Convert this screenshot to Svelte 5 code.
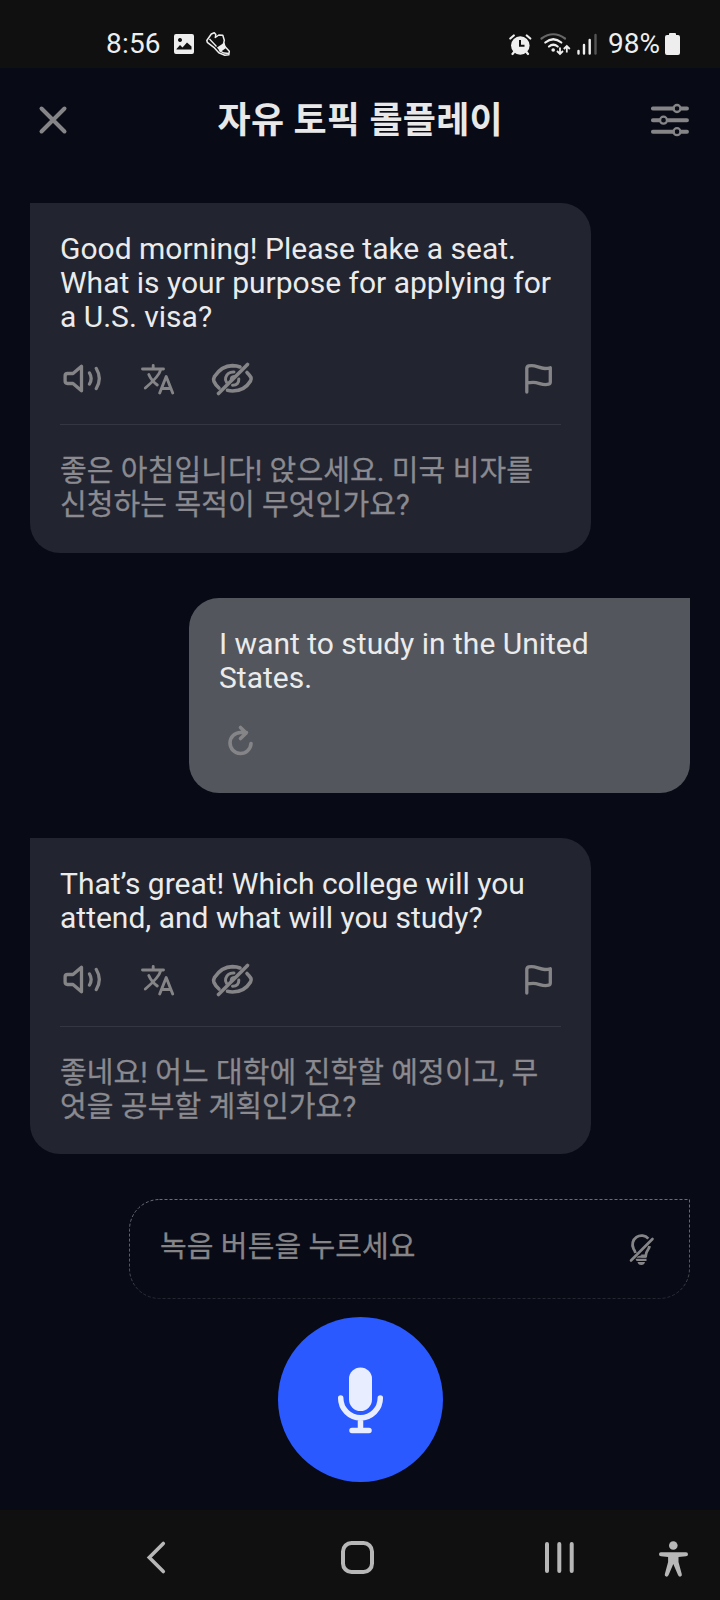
<script>
  const messages = [
    {
      side: 'tutor',
      lines: ['Good morning! Please take a seat.', 'What is your purpose for applying for', 'a U.S. visa?'],
      translation: ['좋은 아침입니다! 앉으세요. 미국 비자를', '신청하는 목적이 무엇인가요?']
    },
    {
      side: 'user',
      lines: ['I want to study in the United', 'States.']
    },
    {
      side: 'tutor late',
      lines: ['That’s great! Which college will you', 'attend, and what will you study?'],
      translation: ['좋네요! 어느 대학에 진학할 예정이고, 무', '엇을 공부할 계획인가요?']
    }
  ];
</script>

<div class="screen">
  <div class="status">
    <span class="clock">8:56</span>
    <svg class="pic" width="20" height="20" viewBox="174 34 20 20">
      <path fill="#eee" fill-rule="evenodd" d="M176 34h16q2 0 2 2v16q0 2-2 2h-16q-2 0-2-2v-16q0-2 2-2zM176.500 49.500h15v-3l-4.500-4-4.500 5-2.500-2.500-3.500 4zM180 38a2 2 0 1 0 .01 0z" />
    </svg>
    <svg class="shoe" width="26" height="26" viewBox="205 31 26 26">
      <path fill="none" stroke="#eee" stroke-width="1.500" stroke-linejoin="round" d="M206.800 40.500l4.500-6.500 3-1.300 1.500 1.800-.5 3 3.500-2.500 4 .3 1.500 5-1 4.500 6 6.500-.5 3.500-4 .5-6-2.500-5-5.500-6.500-5z" />
      <path fill="#eee" d="M217 47.500l7.500-5 1.500 5.500-5.500 4z" />
      <path fill="none" stroke="#eee" stroke-width="1.300" d="M209.500 39l7 7.500M219 50.500l5 2.500 5 .5" />
    </svg>
    <svg class="alarm" width="23" height="23" viewBox="509 32 23 23">
      <circle cx="520.300" cy="44.500" r="9.300" fill="#eee" />
      <g fill="none" stroke="#eee" stroke-width="2.200" stroke-linecap="round">
        <path d="M510.300 37.500l3.500-3M530.300 37.500l-3.500-3M514.500 50.500l-2 2.500M526 50.500l2 2.500" />
      </g>
      <path d="M520 39v5.800h4.500" fill="none" stroke="#101010" stroke-width="2" />
    </svg>
    <svg class="wifi" width="32" height="24" viewBox="540 31 32 24">
      <g fill="none" stroke-width="2.200" stroke-linecap="round">
        <path d="M541.500 37.500q11.700-8.500 23.500 0" stroke="#666" />
        <path d="M545.300 41.500q8-6.500 16 0M549 45.500q4.300-3.500 8.700 0" stroke="#eee" />
      </g>
      <circle cx="553.200" cy="49" r="1.800" fill="#eee" />
      <path fill="none" stroke="#eee" stroke-width="1.800" d="M560 46.500v6M557 50l3 3 3-3M566.800 51.500v-6M563.800 48l3-3 3 3" />
    </svg>
    <svg class="signal" width="22" height="24" viewBox="576 31 22 24">
      <path stroke="#eee" stroke-width="2.400" stroke-linecap="round" d="M578.500 50v2.500M584 44v8.500M589.700 39v13.500" />
      <path stroke="#555" stroke-width="2.400" stroke-linecap="round" d="M595.500 34v18.500" />
    </svg>
    <span class="percent">98%</span>
    <svg class="battery" width="16" height="24" viewBox="665 32 16 24">
      <path fill="#eee" d="M669 35v-1q0-1 1-1h5q1 0 1 1v1h2q2 0 2 2v16q0 2-2 2h-11q-2 0-2-2v-16q0-2 2-2z" />
    </svg>
  </div>

  <header>
    <svg width="30" height="30" viewBox="37.500 105.500 30 30">
      <path d="M41 109l23 23M64 109l-23 23" stroke="#858588" stroke-width="4" stroke-linecap="round" />
    </svg>
    <h1>자유 토픽 롤플레이</h1>
    <svg width="40" height="34" viewBox="650 103 40 34">
      <g stroke="#858588" stroke-width="3.900" stroke-linecap="round" fill="none">
        <path d="M652.900 108.500h20M681.500 108.500h5.500M652.900 120.200h6.300M668 120.200h19M652.900 131.700h20M681.500 131.700h5.500" />
        <circle cx="677" cy="108.500" r="3.500" stroke-width="2.300" />
        <circle cx="663.500" cy="120.200" r="3.500" stroke-width="2.300" />
        <circle cx="677" cy="131.700" r="3.500" stroke-width="2.300" />
      </g>
    </svg>
  </header>

  <main>
    {#each messages as m}
      <section class="bubble {m.side}">
        <div class="speech">
          {#each m.lines as line}<p>{line}</p>{/each}
        </div>
        {#if m.translation}
          <div class="actions">
            <svg width="44" height="40" viewBox="60.500 358 44 40">
              <g fill="none" stroke="#858588" stroke-width="3.300" stroke-linecap="round" stroke-linejoin="round">
                <path d="M82 366.200v24.600L73.500 383.500h-5.500q-2.400 0-2.400-2.400v-5.200q0-2.400 2.400-2.400h5.500z" />
                <path d="M90 373q3.300 5.500 0 11M96.800 368.500q6 10 0 20" />
              </g>
            </svg>
            <svg width="36" height="40" viewBox="140 358 36 40">
              <g fill="none" stroke="#858588" stroke-width="2.900" stroke-linecap="round" stroke-linejoin="round">
                <path d="M142.500 369h21M153.200 365.500v3M160.800 369.500q-1.800 7-15.500 18.500M148.800 374.500q2.500 6 8.500 10.500" />
                <path d="M159.700 393l6.500-16.500 6.500 16.500M162 388.500h8.500" />
              </g>
            </svg>
            <svg width="46" height="40" viewBox="208.500 358 46 40">
              <g fill="none" stroke="#858588" stroke-width="3.600" stroke-linecap="round">
                <path d="M218.500 388q-3.500-3-5-6.500Q212.500 379 214 376.500Q221 365.800 232 365.600Q236.500 365.700 239.500 367M246.500 372.500q2.500 2.500 4 5Q251 379 250 381Q244 391 232 391Q229.500 391 227 390.300" />
                <path d="M226 382.200q-1.600-2-.8-4.700Q227 371.700 233.500 372M238.300 379q.3 6-6.300 6.300M230.800 379.500q-.3-2.500 3-3" stroke-width="3" />
                <path d="M218 393.500L247 364.500" stroke-width="3.600" />
              </g>
            </svg>
            <svg class="flag" width="32" height="40" viewBox="522 358 32 40">
              <path fill="none" stroke="#858588" stroke-width="3.300" stroke-linecap="round" stroke-linejoin="round" d="M526.800 392v-23.500q0-2 2-2.600c6-1.800 10 2.600 16.200 2.600q3 0 5.300-.8v14.300q0 1.700-1.700 2.200c-6 1.800-9.500-1.900-15.500-1.900q-3 0-6 .6" />
            </svg>
          </div>
          <div class="translation">
            {#each m.translation as line}<p>{line}</p>{/each}
          </div>
        {:else}
          <svg class="retry" width="32" height="36" viewBox="226 722 32 36">
            <path fill="none" stroke="#858588" stroke-width="3.600" stroke-linecap="round" stroke-linejoin="round" d="M251 743.500a10.500 10.500 0 1 1-10.500-11h6M240.500 727.500l5.700 5.500-5.700 5.500" />
          </svg>
        {/if}
      </section>
    {/each}

    <section class="prompt">
      <svg class="outline" width="561" height="100" viewBox="0 0 561 100">
        <defs>
          <linearGradient id="fade" gradientUnits="userSpaceOnUse" x1="0" y1="0" x2="0" y2="100">
            <stop offset="0" stop-color="#6c6d74" />
            <stop offset=".6" stop-color="#5c5d64" />
            <stop offset="1" stop-color="#25272f" />
          </linearGradient>
        </defs>
        <path d="M30.500 .5H560.500V69.500a30 30 0 0 1-30 30H30.500a30 30 0 0 1-30-30V30.500a30 30 0 0 1 30-30z" fill="none" stroke="url(#fade)" stroke-dasharray="3 2" />
      </svg>
      <p>녹음 버튼을 누르세요</p>
      <svg width="28" height="36" viewBox="628 1231 28 36">
        <path fill="none" stroke="#858588" stroke-width="2.800" d="M635.500 1252q-.5-2.200-2-4.300a9 9 0 0 1 14.800-10M649.500 1245q-.2 1.500-1 2.700-2.500 3.500-2.800 7.300h-4.500" />
        <path stroke="#858588" stroke-width="2.600" stroke-linecap="round" d="M631 1259.500l21.500-21.500" />
        <path fill="#858588" d="M637.500 1255.500l3-1h5.500v2.300h-9.500zM635.500 1257.800h11v2.300h-10zM637.500 1261h7.500q-.5 3-3.700 3t-3.800-3z" />
      </svg>
    </section>
  </main>

  <div class="record">
    <svg width="48" height="70" viewBox="337 1365 48 70">
      <rect x="349" y="1367.500" width="23" height="43.500" rx="11.500" fill="#e8edff" />
      <path d="M340.700 1398a19.800 19.800 0 0 0 39.600 0M360.500 1419v11M352 1430.500h17" fill="none" stroke="#e8edff" stroke-width="5.500" stroke-linecap="round" />
    </svg>
  </div>

  <nav>
    <svg class="back" width="24" height="40" viewBox="145 1538 24 40">
      <path d="M163.300 1543.500l-14 14 14 14" fill="none" stroke="#b7b7b7" stroke-width="3.600" stroke-linecap="round" />
    </svg>
    <svg class="home" width="36" height="40" viewBox="340 1538 36 40">
      <rect x="343" y="1543" width="29" height="29" rx="8.500" fill="none" stroke="#b7b7b7" stroke-width="4" />
    </svg>
    <svg class="recents" width="34" height="40" viewBox="542 1538 34 40">
      <path d="M547 1544v27M559.300 1544v27M571.700 1544v27" stroke="#b7b7b7" stroke-width="4" stroke-linecap="round" />
    </svg>
    <svg class="access" width="32" height="40" viewBox="657 1538 32 40">
      <g fill="#b7b7b7">
        <circle cx="673.300" cy="1545.500" r="4.300" />
        <path d="M661 1552.200h25q2 0 2 2t-2 2.100l-7.500.8v5l3.300 12.200q.4 2-1.300 2.300t-2.500-1.500l-4.700-11-4.700 11q-.8 1.800-2.500 1.500t-1.300-2.300l3.300-12.200v-5l-7.100-.8q-2 0-2-2.100t2-2z" />
      </g>
    </svg>
  </nav>
</div>

<style>
  :global(body) { margin: 0; background: #080a16; }
  .screen {
    width: 720px; height: 1600px; overflow: hidden; box-sizing: border-box;
    display: flex; flex-direction: column; background: #080a16; color: #ebebec;
    font-family: Roboto, "Noto Sans CJK KR", sans-serif;
  }
  svg { display: block; flex: none; }
  p, h1 { margin: 0; white-space: nowrap; }
  .status {
    height: 68px; flex: none; box-sizing: border-box; padding: 20px 39px 0 106px;
    display: flex; align-items: center; background: #101010;
    font-size: 28px; line-height: 48px; color: #eee;
  }
  .clock { width: 68px; letter-spacing: .2px; }
  .shoe { margin-left: 11px; }
  .alarm { margin-left: auto; }
  .wifi { margin-left: 8px; }
  .signal { margin-left: 4px; }
  .percent { margin-left: 10px; width: 57px; }
  header {
    height: 105px; flex: none; box-sizing: border-box; padding: 0 30px 1px 37.500px;
    display: flex; justify-content: space-between; align-items: center;
  }
  h1 { font-size: 36px; line-height: 48px; font-weight: 700; letter-spacing: .25px; padding: 1px 0 0 3px; color: #e8e8e9; }
  main {
    height: 1143px; flex: none; box-sizing: border-box; padding: 30px 30px 0;
    display: flex; flex-direction: column; gap: 45px;
  }
  .bubble { flex: none; box-sizing: border-box; padding: 29px 30px 0; font-size: 30px; line-height: 34px; }
  .tutor { width: 561px; height: 350px; background: #22242f; border-radius: 0 30px 30px 30px; }
  .late { height: 316px; }
  .user { width: 501px; height: 195px; align-self: flex-end; background: #53565d; border-radius: 30px 0 30px 30px; }
  .actions {
    display: flex; height: 40px; margin-top: 24px; padding-bottom: 26px;
    border-bottom: 1px solid #343640;
  }
  .actions svg:nth-child(2) { margin-left: 36px; }
  .actions svg:nth-child(3) { margin-left: 33px; }
  .actions .flag { margin-left: auto; margin-right: 7px; }
  .late .actions { padding-bottom: 27px; }
  .translation { margin-top: 29px; font-size: 29px; letter-spacing: .1px; color: #8a8a90; -webkit-text-stroke: .3px #8a8a90; }
  .retry { margin: 27px 0 0 7px; }
  .prompt {
    position: relative; flex: none; align-self: flex-end; width: 561px; height: 101px; box-sizing: border-box;
    padding: 0 34px 0 31px; display: flex; align-items: center; justify-content: space-between;
    font-size: 29px; letter-spacing: .1px; color: #858588; -webkit-text-stroke: .3px #858588;
  }
  .prompt p { padding-bottom: 6px; line-height: 34px; }
  .outline { position: absolute; left: 0; top: 0; }
  .record {
    flex: none; width: 165px; height: 165px; margin: 1px 0 28px 278px; border-radius: 50%;
    background: #2a59ff; display: flex; align-items: center; justify-content: center;
  }
  nav { height: 90px; flex: none; display: flex; align-items: center; background: #101010; padding-top: 5px; box-sizing: border-box; }
  .back { margin-left: 145px; }
  .home { margin-left: 170.500px; }
  .recents { margin-left: 166.500px; }
  .access { margin-left: 81px; }
</style>
